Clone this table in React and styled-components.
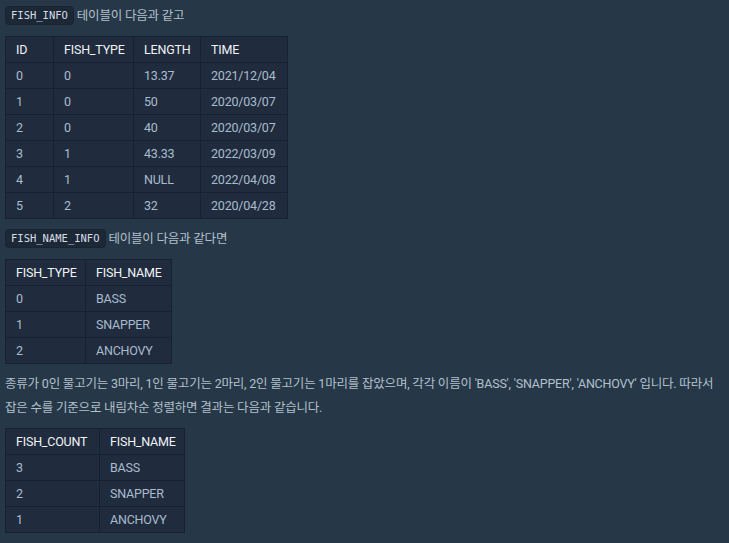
import styled, { createGlobalStyle } from "styled-components";

const GlobalStyle = createGlobalStyle`
	html, body {
		margin: 0;
		padding: 0;
		background-color: #263747;
	}
`;

const fishInfo = {
	head: [
		["ID", 48],
		["FISH_TYPE", 80],
		["LENGTH", 67],
		["TIME", 87],
	],
	rows: [
		["0", "0", "13.37", "2021/12/04"],
		["1", "0", "50", "2020/03/07"],
		["2", "0", "40", "2020/03/07"],
		["3", "1", "43.33", "2022/03/09"],
		["4", "1", "NULL", "2022/04/08"],
		["5", "2", "32", "2020/04/28"],
	],
};

const fishNameInfo = {
	head: [
		["FISH_TYPE", 80],
		["FISH_NAME", 86],
	],
	rows: [
		["0", "BASS"],
		["1", "SNAPPER"],
		["2", "ANCHOVY"],
	],
};

const result = {
	head: [
		["FISH_COUNT", 94],
		["FISH_NAME", 85],
	],
	rows: [
		["3", "BASS"],
		["2", "SNAPPER"],
		["1", "ANCHOVY"],
	],
};

function DataTable({ data }) {
	return (
		<Table>
			<thead>
				<tr>
					{data.head.map(([label, width]) => (
						<Th key={label} $width={width}>
							{label}
						</Th>
					))}
				</tr>
			</thead>
			<tbody>
				{data.rows.map((row, i) => (
					<tr key={i}>
						{row.map((cell, j) => (
							<Td key={j}>{cell}</Td>
						))}
					</tr>
				))}
			</tbody>
		</Table>
	);
}

export default function App() {
	return (
		<>
			<GlobalStyle />
			<Wrapper>
				<Paragraph>
					<Code>FISH_INFO</Code> 테이블이 다음과 같고
				</Paragraph>
				<DataTable data={fishInfo} />
				<Paragraph>
					<Code>FISH_NAME_INFO</Code> 테이블이 다음과 같다면
				</Paragraph>
				<DataTable data={fishNameInfo} />
				<Paragraph>
					종류가 0인 물고기는 3마리, 1인 물고기는 2마리, 2인 물고기는 1마리를 잡았으며, 각각 이름이
					'BASS', 'SNAPPER', 'ANCHOVY' 입니다. 따라서 잡은 수를 기준으로 내림차순 정렬하면 결과는
					다음과 같습니다.
				</Paragraph>
				<DataTable data={result} />
			</Wrapper>
		</>
	);
}

const Wrapper = styled.div`
	padding: 4px 6px 0 5px;
	font-family: Roboto, "Noto Sans CJK KR", sans-serif;
	font-size: 12.5px;
	letter-spacing: -0.2px;
	color: #b2c0cc;
`;

const Paragraph = styled.p`
	margin: 0;
	line-height: 24px;
`;

const Code = styled.code`
	display: inline-block;
	font-family: "DejaVu Sans Mono", monospace;
	font-size: 10.5px;
	letter-spacing: 0;
	line-height: 15px;
	padding: 1px 5px;
	border-radius: 4px;
	background-color: #1d2837;
	border: 1px solid #1a2330;
	color: #d6dee8;
	vertical-align: 1px;
`;

const Table = styled.table`
	border-collapse: collapse;
	margin: 8px 0;
	background-color: #202b3d;
`;

const Th = styled.th`
	box-sizing: border-box;
	width: ${(p) => p.$width}px;
	border: 1px solid #172130;
	padding: 3px 8px 3px 10px;
	line-height: 19px;
	text-align: left;
	font-weight: 400;
	color: #f0f3f7;
`;

const Td = styled.td`
	border: 1px solid #172130;
	padding: 3px 8px 3px 10px;
	line-height: 19px;
	color: #a9bccd;
`;
